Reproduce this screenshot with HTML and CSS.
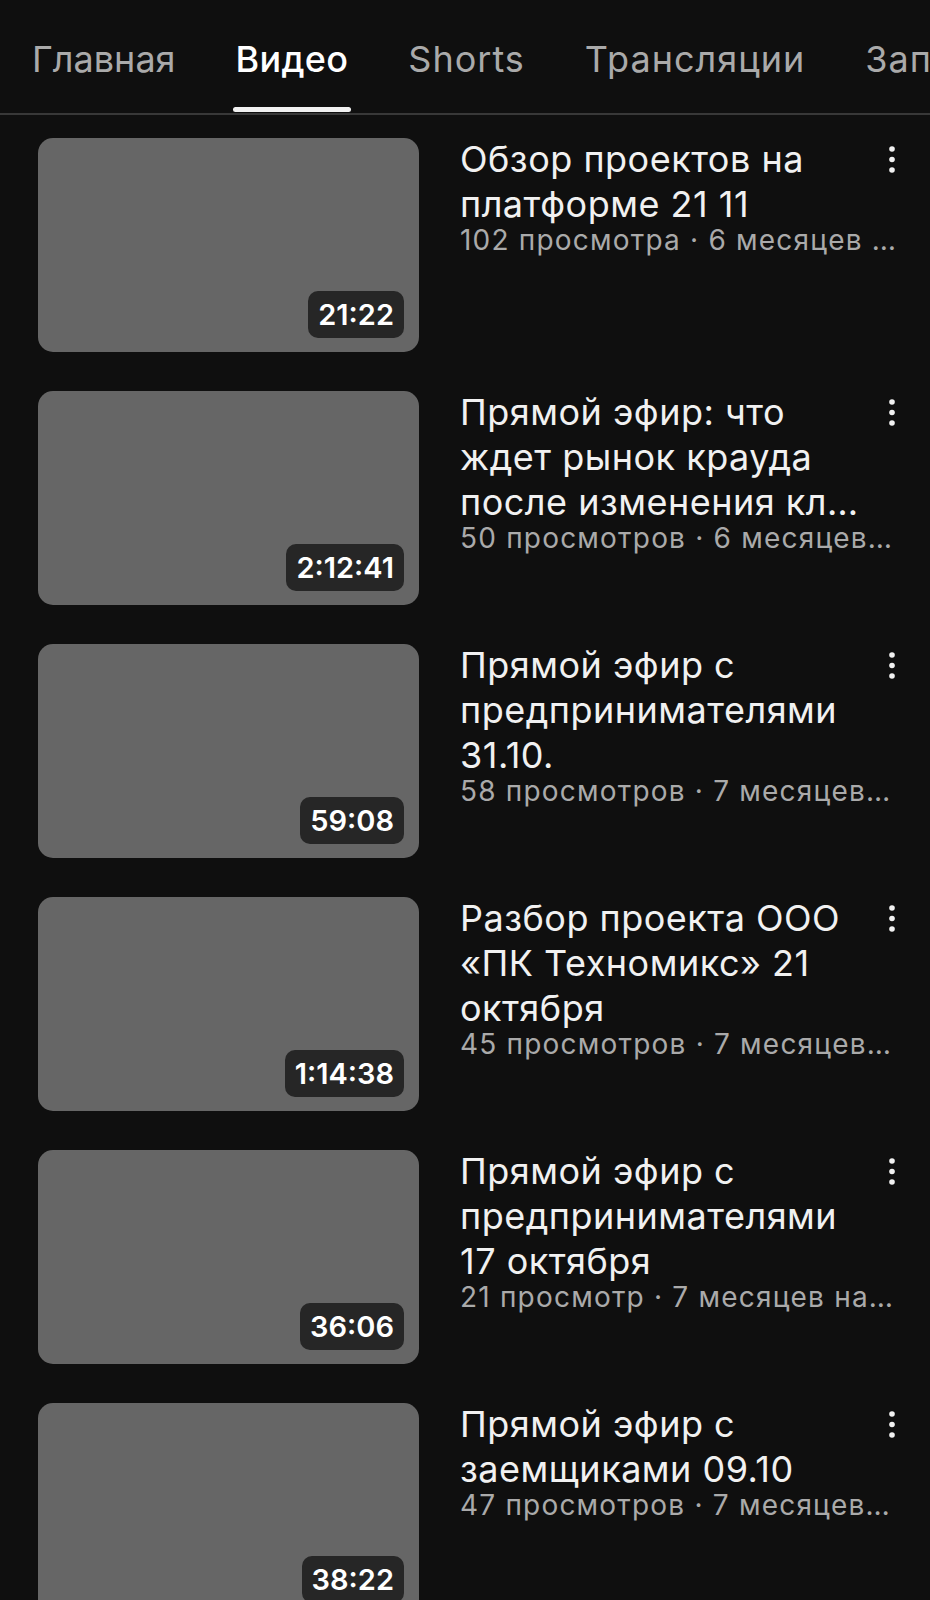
FILE: index.html
```html
<!DOCTYPE html>
<html lang="ru">
<head>
<meta charset="utf-8">
<title>Видео</title>
<link rel="stylesheet" href="styles.css">
</head>
<body>
<nav class="tabs">
  <div class="tab"><span class="tab-label">Главная</span><span class="ind"></span></div>
  <div class="tab active"><span class="tab-label">Видео</span><span class="ind"></span></div>
  <div class="tab"><span class="tab-label">Shorts</span><span class="ind"></span></div>
  <div class="tab"><span class="tab-label">Трансляции</span><span class="ind"></span></div>
  <div class="tab"><span class="tab-label">Записи</span><span class="ind"></span></div>
</nav>
<main class="list">
  <div class="row">
    <div class="thumb"><span class="dur">21:22</span></div>
    <div class="info">
      <div class="title">Обзор проектов на платформе 21 11</div>
      <button class="more" aria-label="Меню"><svg viewBox="0 0 10 30" width="10" height="30"><circle cx="5" cy="4" r="2.8"/><circle cx="5" cy="14.5" r="2.8"/><circle cx="5" cy="25" r="2.8"/></svg></button>
      <div class="meta">102 просмотра · 6 месяцев назад</div>
    </div>
  </div>
  <div class="row">
    <div class="thumb"><span class="dur">2:12:41</span></div>
    <div class="info">
      <div class="title">Прямой эфир: что ждет рынок крауда <span class="cut">после изменения ключевых правил</span></div>
      <button class="more" aria-label="Меню"><svg viewBox="0 0 10 30" width="10" height="30"><circle cx="5" cy="4" r="2.8"/><circle cx="5" cy="14.5" r="2.8"/><circle cx="5" cy="25" r="2.8"/></svg></button>
      <div class="meta">50 просмотров · 6 месяцев назад</div>
    </div>
  </div>
  <div class="row">
    <div class="thumb"><span class="dur">59:08</span></div>
    <div class="info">
      <div class="title">Прямой эфир с предпринимателями 31.10.</div>
      <button class="more" aria-label="Меню"><svg viewBox="0 0 10 30" width="10" height="30"><circle cx="5" cy="4" r="2.8"/><circle cx="5" cy="14.5" r="2.8"/><circle cx="5" cy="25" r="2.8"/></svg></button>
      <div class="meta">58 просмотров · 7 месяцев назад</div>
    </div>
  </div>
  <div class="row">
    <div class="thumb"><span class="dur">1:14:38</span></div>
    <div class="info">
      <div class="title">Разбор проекта ООО «ПК Техномикс» 21 октября</div>
      <button class="more" aria-label="Меню"><svg viewBox="0 0 10 30" width="10" height="30"><circle cx="5" cy="4" r="2.8"/><circle cx="5" cy="14.5" r="2.8"/><circle cx="5" cy="25" r="2.8"/></svg></button>
      <div class="meta">45 просмотров · 7 месяцев назад</div>
    </div>
  </div>
  <div class="row">
    <div class="thumb"><span class="dur">36:06</span></div>
    <div class="info">
      <div class="title">Прямой эфир с предпринимателями 17 октября</div>
      <button class="more" aria-label="Меню"><svg viewBox="0 0 10 30" width="10" height="30"><circle cx="5" cy="4" r="2.8"/><circle cx="5" cy="14.5" r="2.8"/><circle cx="5" cy="25" r="2.8"/></svg></button>
      <div class="meta">21 просмотр · 7 месяцев назад</div>
    </div>
  </div>
  <div class="row">
    <div class="thumb"><span class="dur">38:22</span></div>
    <div class="info">
      <div class="title">Прямой эфир с заемщиками 09.10</div>
      <button class="more" aria-label="Меню"><svg viewBox="0 0 10 30" width="10" height="30"><circle cx="5" cy="4" r="2.8"/><circle cx="5" cy="14.5" r="2.8"/><circle cx="5" cy="25" r="2.8"/></svg></button>
      <div class="meta">47 просмотров · 7 месяцев назад</div>
    </div>
  </div>
</main>
</body>
</html>
```

FILE: styles.css
```css
html, body {
  margin: 0;
  padding: 0;
  background: #0f0f0f;
}
body {
  font-family: Inter, "Noto Sans", "DejaVu Sans", sans-serif;
  color: #f1f1f1;
  width: 930px;
  height: 1600px;
  overflow: hidden;
}
.tabs {
  display: flex;
  gap: 54px;
  padding-left: 29px;
  height: 113px;
  border-bottom: 2px solid #383838;
  overflow: hidden;
  white-space: nowrap;
}
.tab {
  display: flex;
  flex-direction: column;
  align-items: stretch;
  flex: none;
}
.tab-label {
  display: block;
  padding: 37px 3px 0;
  font-size: 36px;
  line-height: 44px;
  letter-spacing: 1px;
  color: #aaaaaa;
}
.tab:first-child .tab-label {
  letter-spacing: 0;
}
.tab.active .tab-label {
  color: #ffffff;
  font-weight: 500;
  letter-spacing: 0.3px;
}
.ind {
  display: block;
  height: 5px;
  margin-top: 26px;
  border-radius: 3px;
  background: transparent;
}
.tab.active .ind {
  background: #f1f1f1;
}
.list {
  padding-top: 23px;
}
.row {
  display: flex;
  padding-left: 38px;
  margin-bottom: 39px;
}
.thumb {
  flex: none;
  width: 381px;
  height: 214px;
  background: #666666;
  border-radius: 15px;
  display: flex;
  align-items: flex-end;
  justify-content: flex-end;
  padding: 0 15px 14px 0;
  box-sizing: border-box;
}
.dur {
  display: block;
  height: 47px;
  line-height: 47px;
  padding: 0 10px;
  border-radius: 10px;
  background: #262626;
  color: #ffffff;
  font-size: 29px;
  font-weight: 600;
}
.info {
  flex: 1;
  min-width: 0;
  margin-left: 41px;
  padding-right: 16px;
  display: grid;
  grid-template-columns: 1fr 44px;
  align-content: start;
}
.title {
  grid-column: 1;
  grid-row: 1;
  font-size: 36px;
  line-height: 45px;
  letter-spacing: 0.5px;
  margin-top: -1px;
  color: #f1f1f1;
  display: -webkit-box;
  -webkit-line-clamp: 3;
  -webkit-box-orient: vertical;
  overflow: hidden;
}
.cut {
  display: inline-block;
  max-width: 400px;
  white-space: nowrap;
  overflow: hidden;
  text-overflow: ellipsis;
  vertical-align: top;
}
.more {
  grid-column: 2;
  grid-row: 1;
  justify-self: center;
  align-self: start;
  background: none;
  border: 0;
  padding: 0;
  margin-top: 7px;
  width: 10px;
  height: 30px;
  fill: #f1f1f1;
}
.more svg {
  display: block;
}
.meta {
  grid-column: 1 / span 2;
  grid-row: 2;
  margin-right: 18px;
  margin-top: -3px;
  font-size: 28px;
  line-height: 32px;
  letter-spacing: 1.2px;
  color: #aaaaaa;
  white-space: nowrap;
  overflow: hidden;
  text-overflow: ellipsis;
}
```
